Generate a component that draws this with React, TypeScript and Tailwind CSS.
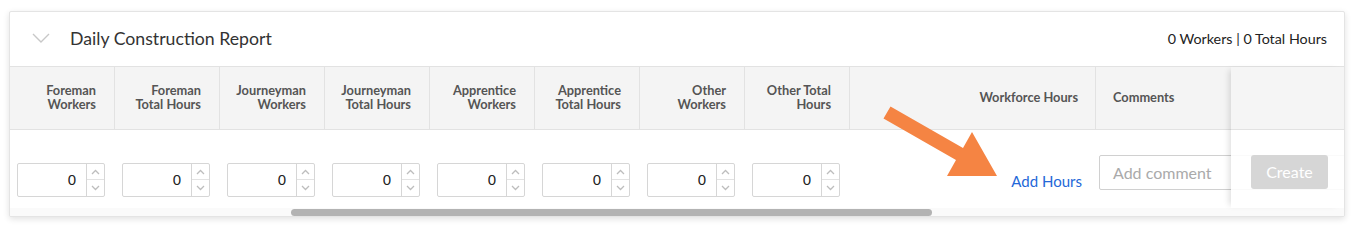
import React from 'react'

const columns = [
  ['Foreman', 'Workers'],
  ['Foreman', 'Total Hours'],
  ['Journeyman', 'Workers'],
  ['Journeyman', 'Total Hours'],
  ['Apprentice', 'Workers'],
  ['Apprentice', 'Total Hours'],
  ['Other', 'Workers'],
  ['Other Total', 'Hours'],
]

function Spinner() {
  return (
    <div className="flex w-[18px] flex-col border-l border-[#d6d6d6]">
      <div className="flex h-1/2 items-center justify-center border-b border-[#e2e2e2]">
        <svg width="9" height="6" viewBox="0 0 9 6" fill="none">
          <path d="M1 5L4.5 1.5L8 5" stroke="#bdbdbd" strokeWidth="1.3" />
        </svg>
      </div>
      <div className="flex h-1/2 items-center justify-center">
        <svg width="9" height="6" viewBox="0 0 9 6" fill="none">
          <path d="M1 1L4.5 4.5L8 1" stroke="#bdbdbd" strokeWidth="1.3" />
        </svg>
      </div>
    </div>
  )
}

function NumberInput() {
  return (
    <div className="flex h-[34px] w-[88px] rounded-[2px] border border-[#d6d6d6] bg-white">
      <div className="flex flex-1 items-center justify-end pr-[10px] font-['Liberation_Sans',sans-serif] text-[15px] text-[#222]">
        0
      </div>
      <Spinner />
    </div>
  )
}

export default function App() {
  return (
    <div className="relative h-[226px] w-[1355px] bg-white pl-[9px] pt-[11px] font-['Lato','Noto_Sans',sans-serif]">
      <div className="w-[1336px] overflow-hidden rounded-[2px] border border-[#e4e4e4] bg-white shadow-[0_2px_6px_rgba(0,0,0,0.12)]">
        {/* header */}
        <div className="flex h-[54px] items-center pl-[22px] pr-[17px]">
          <svg width="18" height="10" viewBox="0 0 18 10" fill="none" className="mt-[-2px]">
            <path d="M1 1L9 9L17 1" stroke="#c8c8c8" strokeWidth="1.4" />
          </svg>
          <div className="ml-[20px] text-[17.7px] text-[#333]">Daily Construction Report</div>
          <div className="ml-auto text-[14.3px] text-[#222]">0 Workers | 0 Total Hours</div>
        </div>

        {/* table */}
        <div className="flex border-t border-[#e2e2e2]">
          <div className="flex flex-col">
            <div className="flex h-[63px] border-b border-[#e2e2e2] bg-[#f4f4f4]">
              {columns.map(([a, b], i) => (
                <div
                  key={i}
                  className="flex w-[105px] items-center justify-end border-r border-[#e2e2e2] pb-[2px] pr-[18px] text-right text-[12.8px] font-bold leading-[14px] text-[#555]"
                >
                  <div>
                    {a}
                    <br />
                    {b}
                  </div>
                </div>
              ))}
              <div className="flex w-[246px] items-center justify-end border-r border-[#e2e2e2] pr-[17px] text-[12.8px] font-bold text-[#555]">
                Workforce Hours
              </div>
              <div className="flex w-[135px] items-center pl-[17px] text-[12.8px] font-bold text-[#555]">
                Comments
              </div>
            </div>
            <div className="flex h-[78px]">
              {columns.map((_, i) => (
                <div key={i} className="w-[105px] pl-[7px] pt-[33px]">
                  <NumberInput />
                </div>
              ))}
              <div className="flex w-[246px] justify-end pr-[14px] pt-[42px]">
                <span className="text-[15px] leading-[18px] text-[#2468d8]">Add Hours</span>
              </div>
              <div className="w-[135px] pl-[3px] pt-[25px]">
                <div className="flex h-[35px] w-[260px] items-center rounded-[2px] border border-[#d0d0d0] pl-[13px] text-[16px] text-[#aaa]">
                  Add comment
                </div>
              </div>
            </div>
          </div>

          {/* sticky action column */}
          <div className="relative flex w-[114px] flex-col shadow-[-5px_0_6px_-3px_rgba(0,0,0,0.13)]">
            <div className="h-[63px] border-b border-[#e2e2e2] bg-[#f4f4f4]/95" />
            <div className="h-[78px] bg-white/90 pl-[20px] pt-[25px]">
              <div className="flex h-[34px] w-[77px] items-center justify-center rounded-[3px] bg-[#d6d6d6] text-[16px] text-white">
                Create
              </div>
            </div>
          </div>
        </div>

        {/* scrollbar */}
        <div className="h-[8px] bg-[#fafafa] pt-[1px]">
          <div className="ml-[281px] h-[7px] w-[641px] rounded-full bg-[#b3b3b3]" />
        </div>
      </div>

      {/* annotation arrow */}
      <svg
        className="pointer-events-none absolute left-0 top-0"
        width="1355"
        height="226"
        viewBox="0 0 1355 226"
      >
        <polygon
          points="890.5,106.4 963,147.9 972,132 997,176 947,176 956,160.1 883.5,118.6"
          fill="#f58443"
        />
      </svg>
    </div>
  )
}
